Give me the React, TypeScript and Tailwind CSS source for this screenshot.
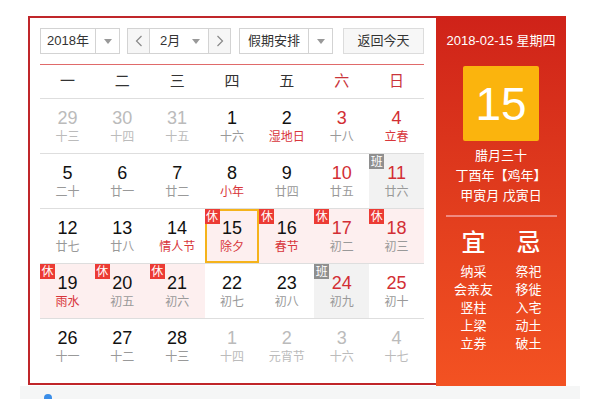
import React from 'react';

type Day = {
  n: number;
  l: string;
  other?: boolean;
  redNum?: boolean;
  redLunar?: boolean;
  tag?: '休' | '班';
  selected?: boolean;
};

const rows: Day[][] = [
  [
    { n: 29, l: '十三', other: true },
    { n: 30, l: '十四', other: true },
    { n: 31, l: '十五', other: true },
    { n: 1, l: '十六' },
    { n: 2, l: '湿地日', redLunar: true },
    { n: 3, l: '十八', redNum: true },
    { n: 4, l: '立春', redNum: true, redLunar: true },
  ],
  [
    { n: 5, l: '二十' },
    { n: 6, l: '廿一' },
    { n: 7, l: '廿二' },
    { n: 8, l: '小年', redLunar: true },
    { n: 9, l: '廿四' },
    { n: 10, l: '廿五', redNum: true },
    { n: 11, l: '廿六', redNum: true, tag: '班' },
  ],
  [
    { n: 12, l: '廿七' },
    { n: 13, l: '廿八' },
    { n: 14, l: '情人节', redLunar: true },
    { n: 15, l: '除夕', redLunar: true, tag: '休', selected: true },
    { n: 16, l: '春节', redLunar: true, tag: '休' },
    { n: 17, l: '初二', redNum: true, tag: '休' },
    { n: 18, l: '初三', redNum: true, tag: '休' },
  ],
  [
    { n: 19, l: '雨水', redLunar: true, tag: '休' },
    { n: 20, l: '初五', tag: '休' },
    { n: 21, l: '初六', tag: '休' },
    { n: 22, l: '初七' },
    { n: 23, l: '初八' },
    { n: 24, l: '初九', redNum: true, tag: '班' },
    { n: 25, l: '初十', redNum: true },
  ],
  [
    { n: 26, l: '十一' },
    { n: 27, l: '十二' },
    { n: 28, l: '十三' },
    { n: 1, l: '十四', other: true },
    { n: 2, l: '元宵节', other: true },
    { n: 3, l: '十六', other: true },
    { n: 4, l: '十七', other: true },
  ],
];

const weekdays = ['一', '二', '三', '四', '五', '六', '日'];
const yi = ['纳采', '会亲友', '竖柱', '上梁', '立券'];
const ji = ['祭祀', '移徙', '入宅', '动土', '破土'];

function Caret() {
  return <span className="w-0 h-0 border-l-[4px] border-r-[4px] border-t-[5px] border-l-transparent border-r-transparent border-t-[#999]" />;
}

function Chevron({ dir }: { dir: 'l' | 'r' }) {
  return (
    <svg width="8" height="12" viewBox="0 0 8 12" fill="none" stroke="#888" strokeWidth="1.2">
      {dir === 'l' ? <path d="M6.5 1 L1.5 6 L6.5 11" /> : <path d="M1.5 1 L6.5 6 L1.5 11" />}
    </svg>
  );
}

function Cell({ d }: { d: Day }) {
  let bg = '';
  if (d.tag === '休') bg = 'bg-[#fdefef]';
  if (d.tag === '班') bg = 'bg-[#f2f2f2]';
  const numColor = d.other ? 'text-[#bbb]' : d.redNum ? 'text-[#d22e34]' : 'text-[#111]';
  const lunarColor = d.other ? 'text-[#bbb]' : d.redLunar ? 'text-[#d8363b]' : 'text-[#999]';
  return (
    <div className={`relative h-[54px] flex flex-col items-center justify-center ${bg}`}>
      {d.selected && <div className="absolute inset-0 border-2 border-[#f5b31b]" />}
      {d.tag && (
        <span
          className={`absolute left-0 top-0 w-[15px] h-[15px] flex items-center justify-center text-[12px] leading-none text-white ${
            d.tag === '休' ? 'bg-[#ec3b34]' : 'bg-[#8f8f8f]'
          }`}
        >
          {d.tag}
        </span>
      )}
      <span className={`text-[18px] leading-[20px] ${numColor}`}>{d.n}</span>
      <span className={`text-[12px] leading-[16px] mt-[1px] ${lunarColor}`}>{d.l}</span>
    </div>
  );
}

export default function App() {
  return (
    <div
      className="w-[600px] h-[399px] bg-white overflow-hidden pt-[16px]"
      style={{ fontFamily: '"Liberation Sans", "Noto Sans CJK SC", sans-serif' }}
    >
      <div className="ml-[28px] flex w-[538px]">
        {/* Calendar */}
        <div className="w-[408px] h-[369px] border-2 border-r-0 border-[#c0262a] pl-[10px] pt-[10px]">
          <div className="w-[384px] flex items-center text-[13px] text-[#333]">
            {/* year */}
            <div className="flex h-[26px] w-[80px] border border-[#d3d3d3] bg-white">
              <span className="flex-1 flex items-center justify-center border-r border-[#d3d3d3]">2018年</span>
              <span className="w-[23px] flex items-center justify-center">
                <Caret />
              </span>
            </div>
            {/* month */}
            <div className="ml-[7px] flex h-[26px] w-[104px] border border-[#d3d3d3] bg-white">
              <span className="w-[22px] flex items-center justify-center border-r border-[#d3d3d3] bg-[#f6f6f6]">
                <Chevron dir="l" />
              </span>
              <span className="flex-1 flex items-center justify-between pl-[10px] pr-[8px]">
                <span>2月</span>
                <Caret />
              </span>
              <span className="w-[22px] flex items-center justify-center border-l border-[#d3d3d3] bg-[#f6f6f6]">
                <Chevron dir="r" />
              </span>
            </div>
            {/* holiday */}
            <div className="ml-[8px] flex h-[26px] w-[94px] border border-[#d3d3d3] bg-white">
              <span className="flex-1 flex items-center justify-center border-r border-[#d3d3d3]">假期安排</span>
              <span className="w-[23px] flex items-center justify-center">
                <Caret />
              </span>
            </div>
            {/* today */}
            <div className="ml-auto flex h-[26px] w-[81px] items-center justify-center border border-[#dcdcdc] bg-[#f7f7f7]">
              返回今天
            </div>
          </div>

          <div className="w-[384px] mt-[10px] border-t border-[#e06a6a]" />

          <div className="w-[384px] grid grid-cols-7 h-[33px] items-center text-[15px]">
            {weekdays.map((w, i) => (
              <span key={w} className={`text-center ${i >= 5 ? 'text-[#c9343a]' : 'text-[#333]'}`}>
                {w}
              </span>
            ))}
          </div>

          <div className="w-[384px]">
            {rows.map((r, i) => (
              <div key={i} className="grid grid-cols-7 border-t border-[#dedede]">
                {r.map((d, j) => (
                  <Cell key={j} d={d} />
                ))}
              </div>
            ))}
          </div>
        </div>

        {/* Side panel */}
        <div className="w-[130px] h-[370px] bg-linear-to-b from-[#cf2219] to-[#f35222] text-white flex flex-col items-center">
          <div className="mt-[17px] text-[13px] leading-[16px]">2018-02-15 星期四</div>
          <div className="mt-[17px] w-[76px] h-[75px] rounded-[2px] bg-[#fbb40d] flex items-center justify-center text-[46px] leading-none">
            15
          </div>
          <div className="mt-[5px] text-[13px] leading-[20px] text-center">
            <div>腊月三十</div>
            <div>丁酉年【鸡年】</div>
            <div>甲寅月 戊寅日</div>
          </div>
          <div className="mt-[9px] w-[111px] border-t-2 border-[#f08a80]" />
          <div className="mt-[12px] w-[110px] grid grid-cols-2 text-center">
            <div className="flex flex-col items-center">
              <span className="text-[24px] leading-[28px] font-medium mb-[6px]">宜</span>
              {yi.map((t) => (
                <span key={t} className="text-[13px] leading-[18px]">
                  {t}
                </span>
              ))}
            </div>
            <div className="flex flex-col items-center">
              <span className="text-[24px] leading-[28px] font-medium mb-[6px]">忌</span>
              {ji.map((t) => (
                <span key={t} className="text-[13px] leading-[18px]">
                  {t}
                </span>
              ))}
            </div>
          </div>
        </div>
      </div>

      {/* strip below */}
      <div className="ml-[20px] w-[560px] h-[20px] bg-[#f5f6f6] relative">
        <span className="absolute left-[24px] top-[8px] w-[8px] h-[8px] rounded-full bg-[#3b8ee8]" />
      </div>
    </div>
  );
}
